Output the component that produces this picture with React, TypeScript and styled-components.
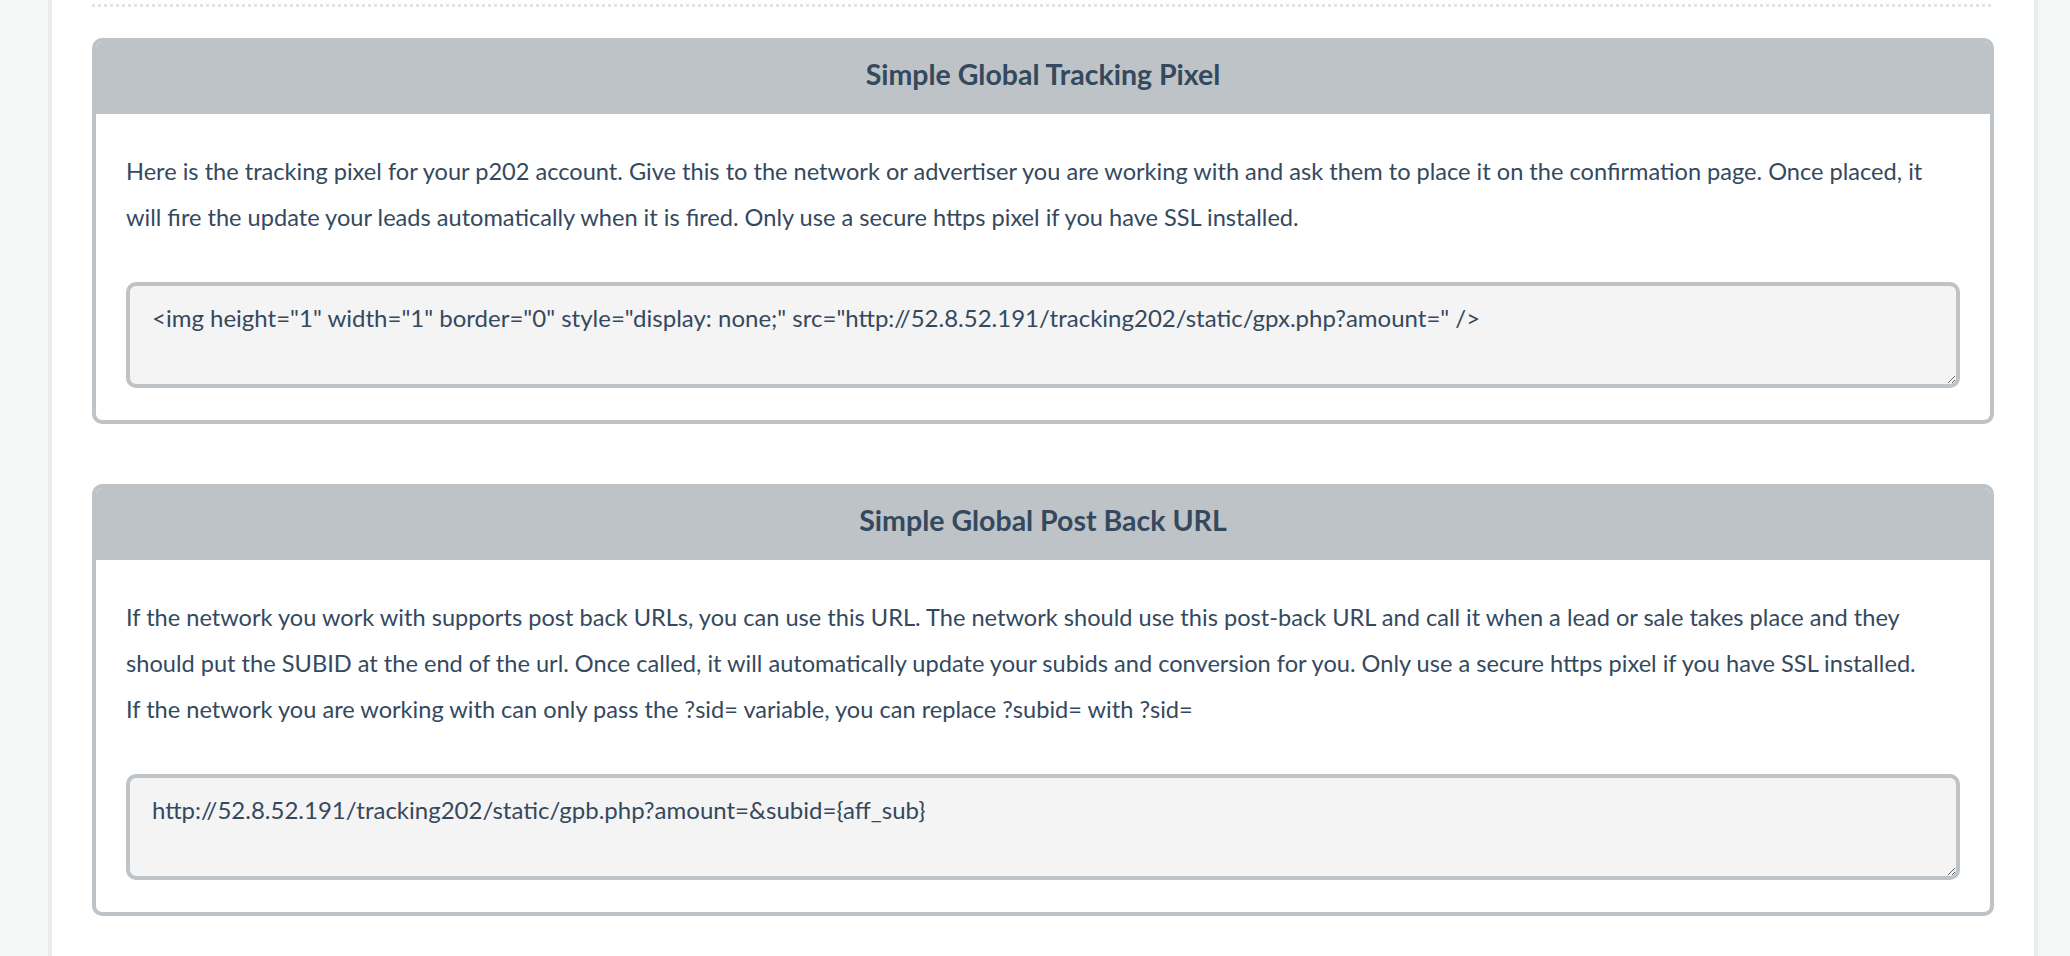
import React from "react";
import styled, { createGlobalStyle } from "styled-components";

const GlobalStyle = createGlobalStyle`
  html, body {
    margin: 0;
    padding: 0;
    background: #f5f6f6;
  }
  body {
    font-family: Lato, "Open Sans", "Liberation Sans", sans-serif;
    color: #34495e;
  }
  * { box-sizing: border-box; }
`;

const Page = styled.div`
  display: flex;
  min-height: 956px;
  width: 2070px;
  overflow: hidden;
`;

const Rail = styled.div<{ $side: "left" | "right" }>`
  flex: none;
  width: ${(p) => (p.$side === "left" ? "52px" : "36px")};
  background: #f5f6f6;
  ${(p) =>
    p.$side === "left"
      ? "border-right: 4px solid #ebecec;"
      : "border-left: 4px solid #ebecec;"}
`;

const Main = styled.main`
  flex: 1;
  background: #ffffff;
  padding: 0 40px 40px;
  display: flex;
  flex-direction: column;
`;

const Divider = styled.div`
  height: 3px;
  margin-top: 4px;
  background: repeating-linear-gradient(
    to right,
    #e2e5e6 0 3px,
    transparent 3px 6px
  );
`;

const Panel = styled.section<{ $gap: number }>`
  margin-top: ${(p) => p.$gap}px;
  border: 4px solid #bdc3c7;
  border-radius: 10px;
  background: #ffffff;
  overflow: hidden;
`;

const PanelHeader = styled.header`
  background: #bdc3c7;
  height: 76px;
  margin: -4px -4px 0;
  padding-bottom: 4px;
  display: flex;
  align-items: center;
  justify-content: center;
`;

const PanelTitle = styled.h3`
  margin: 0;
  font-family: Lato, "Open Sans", "Liberation Sans", sans-serif;
  font-weight: 700;
  font-size: 28.5px;
  color: #34495e;
`;

const PanelBody = styled.div`
  padding: 34px 30px 32px;
`;

const Description = styled.p`
  margin: 0 0 42px;
  font-size: 23.6px;
  line-height: 46px;
  color: #34495e;
`;

const CodeBox = styled.textarea`
  display: block;
  width: 100%;
  height: 106px;
  margin: 0;
  padding: 16px 22px;
  border: 4px solid #bdc3c7;
  border-radius: 10px;
  background: #f4f4f4;
  font-family: Lato, "Open Sans", "Liberation Sans", sans-serif;
  font-size: 24px;
  line-height: 32px;
  color: #34495e;
  resize: vertical;
  outline: none;
`;

const panels = [
  {
    title: "Simple Global Tracking Pixel",
    text: [
      "Here is the tracking pixel for your p202 account. Give this to the network or advertiser you are working with and ask them to place it on the confirmation page. Once placed, it will fire the update your leads automatically when it is fired. Only use a secure https pixel if you have SSL installed.",
    ],
    code: '<img height="1" width="1" border="0" style="display: none;" src="http://52.8.52.191/tracking202/static/gpx.php?amount=" />',
    gap: 31,
  },
  {
    title: "Simple Global Post Back URL",
    text: [
      "If the network you work with supports post back URLs, you can use this URL. The network should use this post-back URL and call it when a lead or sale takes place and they should put the SUBID at the end of the url. Once called, it will automatically update your subids and conversion for you. Only use a secure https pixel if you have SSL installed.",
      "If the network you are working with can only pass the ?sid= variable, you can replace ?subid= with ?sid=",
    ],
    code: "http://52.8.52.191/tracking202/static/gpb.php?amount=&subid={aff_sub}",
    gap: 60,
  },
];

export default function App() {
  return (
    <>
      <GlobalStyle />
      <Page>
        <Rail $side="left" />
        <Main>
          <Divider />
          {panels.map((p) => (
            <Panel key={p.title} $gap={p.gap}>
              <PanelHeader>
                <PanelTitle>{p.title}</PanelTitle>
              </PanelHeader>
              <PanelBody>
                <Description>
                  {p.text.map((t, i) => (
                    <React.Fragment key={i}>
                      {i > 0 && <br />}
                      {t}
                    </React.Fragment>
                  ))}
                </Description>
                <CodeBox readOnly value={p.code} />
              </PanelBody>
            </Panel>
          ))}
        </Main>
        <Rail $side="right" />
      </Page>
    </>
  );
}
